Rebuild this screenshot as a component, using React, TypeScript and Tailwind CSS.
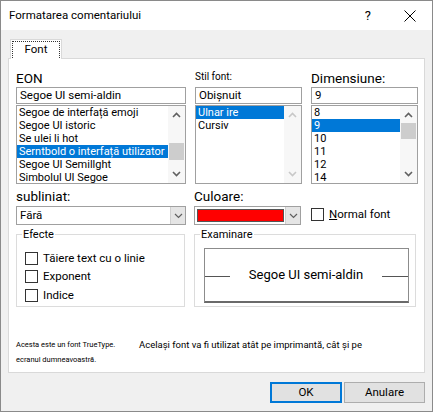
import React from "react";

const font = { fontFamily: 'Roboto, "Noto Sans", sans-serif' };

function Chevron({ up, disabled }: { up?: boolean; disabled?: boolean }) {
  return (
    <svg width="9" height="6" viewBox="0 0 9 6" className="block">
      <polyline
        points={up ? "1,5 4.5,1.5 8,5" : "1,1 4.5,4.5 8,1"}
        fill="none"
        stroke={disabled ? "#c8c8c8" : "#606060"}
        strokeWidth="1.6"
      />
    </svg>
  );
}

function ThinChevron() {
  return (
    <svg width="9" height="6" viewBox="0 0 9 6" className="block">
      <polyline points="1,1 4.5,4.5 8,1" fill="none" stroke="#606060" strokeWidth="1.2" />
    </svg>
  );
}

function ListBox({
  items,
  selected,
  width,
  thumb,
  disabled,
}: {
  items: string[];
  selected: number;
  width: string;
  thumb?: [number, number];
  disabled?: boolean;
}) {
  return (
    <div className={`${width} h-[79px] mt-px border border-[#a0a0a0] bg-white flex overflow-hidden`}>
      <div className="flex-1 flex flex-col overflow-hidden">
        {items.map((t, i) => (
          <div
            key={t}
            className={`h-[13px] shrink-0 leading-[13px] text-[11px] pl-[2px] whitespace-nowrap overflow-hidden ${
              i === selected ? "bg-[#0078d7] text-white" : "text-black"
            }`}
          >
            {t}
          </div>
        ))}
      </div>
      <div className="w-[17px] bg-[#f7f7f7] flex flex-col items-center justify-between py-[6px] relative">
        <Chevron up disabled={disabled} />
        {thumb && (
          <div
            className="absolute left-px right-px bg-[#cdcdcd]"
            style={{ top: thumb[0], height: thumb[1] }}
          />
        )}
        <Chevron disabled={disabled} />
      </div>
    </div>
  );
}

function Check({ label, underline }: { label: string; underline?: boolean }) {
  return (
    <div className="flex items-center gap-[5px] h-[18.5px]">
      <div className="w-[13px] h-[13px] border border-[#333] bg-white shrink-0" />
      <span className="text-[11.5px] text-black whitespace-nowrap">
        {underline ? (
          <>
            <span className="underline">N</span>
            {label.slice(1)}
          </>
        ) : (
          label
        )}
      </span>
    </div>
  );
}

export default function App() {
  return (
    <div
      className="w-[433px] h-[412px] border border-[#8a8a8a] bg-[#f0f0f0] flex flex-col box-border overflow-hidden"
      style={font}
    >
      {/* Title bar */}
      <div className="h-[29px] bg-white flex items-center pl-[8px] shrink-0">
        <span className="text-[11.5px] text-black flex-1">Formatarea comentariului</span>
        <span className="text-[13px] text-black mr-[33px]">?</span>
        <svg width="12" height="12" viewBox="0 0 12 12" className="mr-[16px]">
          <path d="M0.5 0.5 L11.5 11.5 M11.5 0.5 L0.5 11.5" stroke="#000" strokeWidth="1" />
        </svg>
      </div>

      <div className="flex flex-col pl-[7px] pt-[9px]">
        {/* Tab */}
        <div className="ml-[2px] w-[52px] h-[20px] -mb-px relative z-10 bg-white border border-b-0 border-[#d9d9d9] p-px">
          <div className="h-full border border-dotted border-[#333] border-b-0 flex items-center justify-center text-[11.5px] text-black">
            Font
          </div>
        </div>

        {/* Panel */}
        <div className="w-[417px] h-[315px] bg-white border border-[#d9d9d9] pl-[7px] pt-[11px] flex flex-col">
          {/* Row 1 */}
          <div className="flex">
            <div className="flex flex-col w-[170px]">
              <div className="h-[17px] text-[13.5px] leading-[16px] text-black">EON</div>
              <div className="h-[17px] border border-[#a0a0a0] text-[11.5px] leading-[15px] pl-[3px] text-black">
                Segoe UI semi-aldin
              </div>
              <ListBox
                width="w-[170px]"
                selected={3}
                thumb={[37, 17]}
                items={[
                  "Segoe de interfață emoji",
                  "Segoe UI istoric",
                  "Se ulei li hot",
                  "Serntbold o interfață utilizator",
                  "Segoe UI Semillght",
                  "Simbolul UI Segoe",
                ]}
              />
            </div>
            <div className="flex flex-col w-[107px] ml-[9px]">
              <div className="h-[17px] text-[10px] leading-[14px] text-black">Stil font:</div>
              <div className="h-[17px] border border-[#a0a0a0] text-[11.5px] leading-[15px] pl-[3px] text-black">
                Obișnuit
              </div>
              <ListBox width="w-[107px]" selected={0} disabled items={["Ulnar ire", "Cursiv"]} />
            </div>
            <div className="flex flex-col w-[107px] ml-[9px]">
              <div className="h-[17px] text-[13.5px] leading-[16px] text-black">Dimensiune:</div>
              <div className="h-[17px] border border-[#a0a0a0] text-[11.5px] leading-[15px] pl-[3px] text-black">
                9
              </div>
              <ListBox
                width="w-[107px]"
                selected={1}
                thumb={[17, 16]}
                items={["8", "9", "10", "11", "12", "14"]}
              />
            </div>
          </div>

          {/* Row 2 */}
          <div className="flex items-end mt-[4px]">
            <div className="flex flex-col w-[170px]">
              <div className="h-[18px] text-[13.5px] leading-[16px] text-black">subliniat:</div>
              <div className="h-[19px] border border-[#a0a0a0] flex">
                <div className="flex-1 text-[11.5px] leading-[17px] pl-[3px] text-black">Fără</div>
                <div className="w-[15px] bg-[#e5e5e5] border-l border-[#cfcfcf] flex items-center justify-center">
                  <ThinChevron />
                </div>
              </div>
            </div>
            <div className="flex flex-col w-[107px] ml-[8px]">
              <div className="h-[18px] text-[13.5px] leading-[16px] text-black">Culoare:</div>
              <div className="h-[19px] border border-[#a0a0a0] flex">
                <div className="flex-1 p-[2px] pr-[1px]">
                  <div className="h-full bg-[#ff0000] border border-[#555]" />
                </div>
                <div className="w-[15px] bg-[#e5e5e5] border-l border-[#cfcfcf] flex items-center justify-center">
                  <ThinChevron />
                </div>
              </div>
            </div>
            <div className="ml-[10px] mb-[1px]">
              <Check label="Normal font" underline />
            </div>
          </div>

          {/* Groups */}
          <div className="flex mt-[9px]">
            <div className="w-[169px] h-[73px] border border-[#dcdcdc] relative pl-[8px] pt-[14px] flex flex-col">
              <span className="absolute -top-[6px] left-[5px] bg-white px-px text-[11px] leading-[12px] text-black">
                Efecte
              </span>
              <Check label="Tăiere text cu o linie" />
              <Check label="Exponent" />
              <Check label="Indice" />
            </div>
            <div className="w-[222px] h-[73px] border border-[#dcdcdc] ml-[9px] relative pl-[9px] pr-[6px] pt-[13px]">
              <span className="absolute -top-[6px] left-[5px] bg-white px-px text-[11px] leading-[12px] text-black">
                Examinare
              </span>
              <div className="h-[55px] border border-[#8c8c8c] border-b-2 border-b-[#6a6a6a] flex items-center">
                <div className="w-[25px] h-px bg-[#555] mt-[3px]" />
                <div className="flex-1 text-center text-[13px] text-black">Segoe UI semi-aldin</div>
                <div className="w-[26px] h-px bg-[#555] mt-[3px]" />
              </div>
            </div>
          </div>

          {/* Info text */}
          <div className="flex mt-[30px]">
            <div className="w-[123px] shrink-0 flex flex-col text-[7.5px] leading-[15px] text-black">
              <span className="whitespace-nowrap">Acesta este un font TrueType.</span>
              <span className="whitespace-nowrap">ecranul dumneavoastră.</span>
            </div>
            <div className="text-[9.5px] leading-[15px] text-black whitespace-nowrap">
              Același font va fi utilizat atât pe imprimantă, cât și pe
            </div>
          </div>
        </div>

        {/* Buttons */}
        <div className="flex justify-end gap-[2px] mt-[9px] pr-[7px]">
          <button className="w-[72px] h-[21px] bg-[#e1e1e1] border-2 border-[#0078d7] text-[11.5px] text-black">
            OK
          </button>
          <button className="w-[81px] h-[21px] bg-[#e1e1e1] border border-[#adadad] text-[11.5px] text-black">
            Anulare
          </button>
        </div>
      </div>
    </div>
  );
}
